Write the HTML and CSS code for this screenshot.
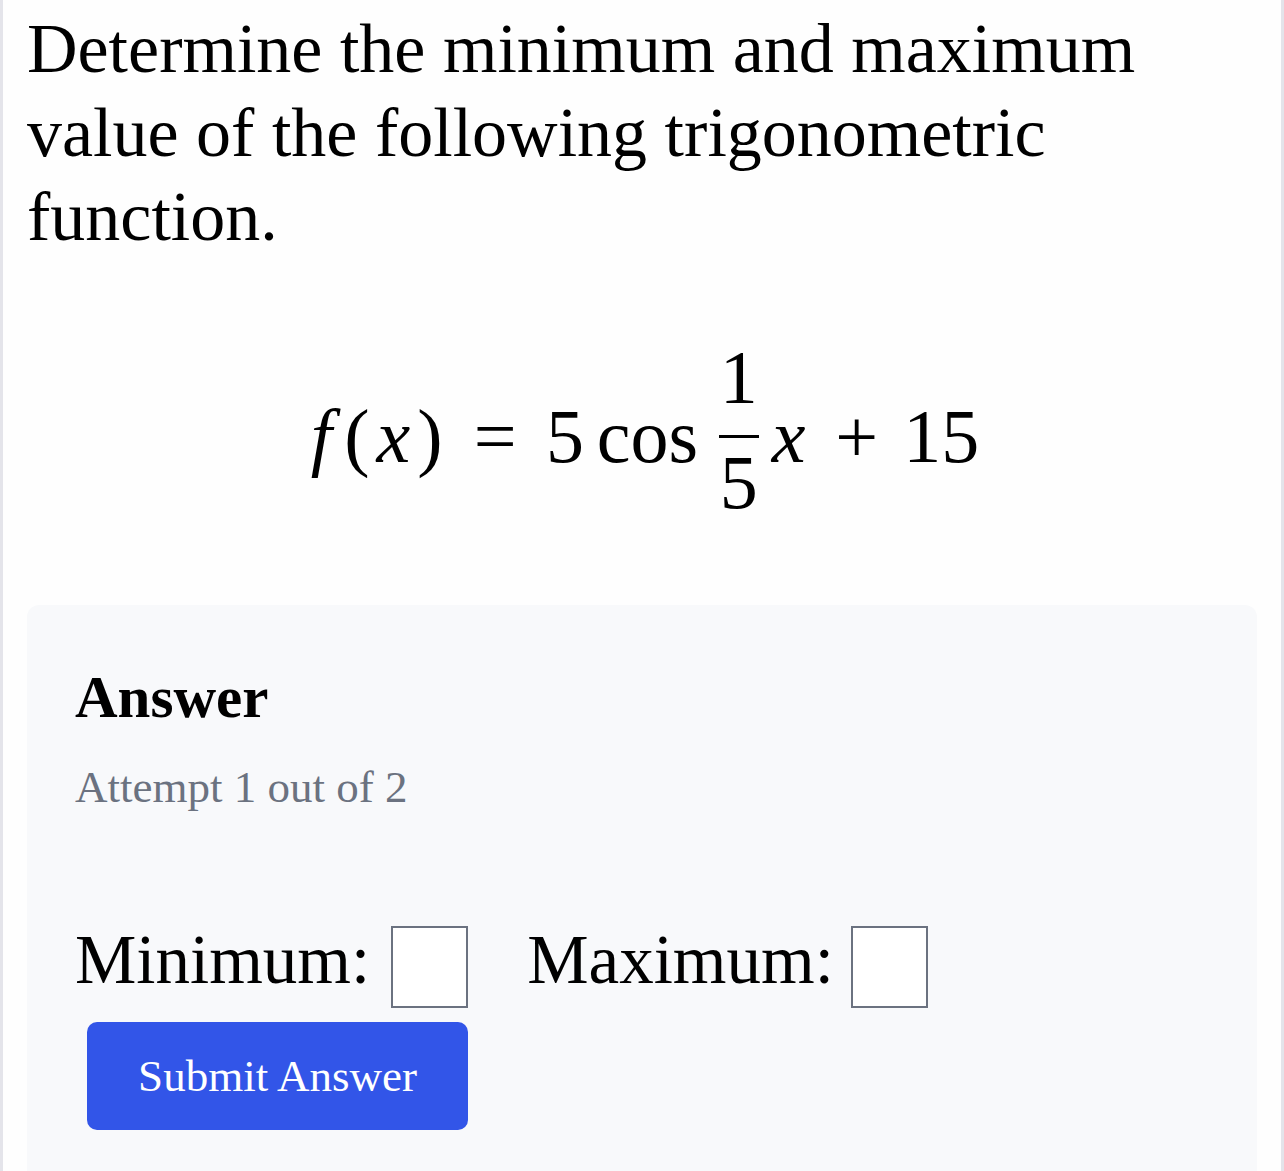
FILE: index.html
```html
<!DOCTYPE html>
<html lang="en">
<head>
    <meta charset="UTF-8">
    <meta name="viewport" content="width=device-width, initial-scale=1.0">
    <title>Trigonometric Function</title>
    <link rel="stylesheet" href="styles.css">
</head>
<body>
    <div class="page">
        <h1 class="question">Determine the minimum and maximum value of the following trigonometric function.</h1>

        <div class="math">
            <span class="atom mi f">f</span><span class="atom paren">(</span><span class="atom mi x">x</span><span class="atom paren">)</span><span class="atom rel">=</span><span class="atom">5</span><span class="atom op">cos</span><span class="frac"><span class="num">1</span><span class="den">5</span></span><span class="atom mi x">x</span><span class="atom bin">+</span><span class="atom">15</span>
        </div>

        <div class="answer-card">
            <h2>Answer</h2>
            <p class="attempt">Attempt 1 out of 2</p>
            <div class="fields">
                <label class="field">
                    <span>Minimum:</span>
                    <input type="text" name="minimum">
                </label>
                <label class="field field-max">
                    <span>Maximum:</span>
                    <input type="text" name="maximum">
                </label>
            </div>
            <button type="button" class="submit-button">Submit Answer</button>
        </div>
    </div>
</body>
</html>
```

FILE: styles.css
```css
html, body {
    margin: 0;
    height: 100%;
    overflow: hidden;
}

body {
    font-family: "Liberation Serif", "Times New Roman", serif;
    color: #000;
    background: #fff;
}

.page {
    display: flex;
    flex-direction: column;
    height: 100vh;
    box-sizing: border-box;
    padding: 0 24px;
    border-left: 3px solid #e4e4ea;
    border-right: 3px solid #e4e4ea;
    background: #fefefe;
}

.question {
    margin: 0;
    padding-top: 7px;
    font-size: 70px;
    font-weight: normal;
    line-height: 84px;
}

/* formula */
.math {
    margin-top: 80px;
    text-align: center;
    font-size: 76px;
    line-height: 1;
    white-space: nowrap;
}

.atom {
    display: inline-block;
    text-align: center;
}

.mi {
    font-style: italic;
}

.f {
    width: 0.49em;
    text-align: left;
    padding-left: 0.08em;
    box-sizing: border-box;
}

.x {
    width: 0.572em;
}

.paren {
    width: 0.389em;
}

.rel {
    width: 0.778em;
    margin: 0 0.278em;
}

.op {
    margin: 0 0.167em;
}

.bin {
    width: 0.778em;
    margin: 0 0.222em;
}

.frac {
    display: inline-flex;
    flex-direction: column;
    width: 0.52em;
    margin: 0 0.11em;
    vertical-align: 59px;
    text-align: center;
}

.num {
    padding-bottom: 20px;
    border-bottom: 3px solid #000;
}

.den {
    padding-top: 6px;
}

/* answer card */
.answer-card {
    flex: 1;
    margin-top: 85px;
    padding: 57px 48px 0;
    background: #f8f9fb;
    border-radius: 12px 12px 0 0;
}

.answer-card h2 {
    margin: 0;
    font-size: 59px;
    font-weight: bold;
    line-height: 70px;
}

.attempt {
    margin: 28px 0 0;
    font-size: 45px;
    line-height: 54px;
    color: #6b7280;
}

.fields {
    display: flex;
    align-items: center;
    gap: 59px;
    margin-top: 98px;
}

.field {
    display: flex;
    align-items: center;
    gap: 21px;
    font-size: 69px;
}

.field-max {
    gap: 17px;
}

.field input {
    width: 77px;
    height: 82px;
    margin-top: 14px;
    box-sizing: border-box;
    border: 2px solid #6b7280;
    border-radius: 0;
    background: #fff;
    font-size: 40px;
}

.submit-button {
    display: block;
    width: 381px;
    height: 108px;
    margin: 14px 0 0 12px;
    border: none;
    border-radius: 10px;
    background: #3255e8;
    color: #fff;
    font-family: "Liberation Serif", "Times New Roman", serif;
    font-size: 45px;
    cursor: pointer;
}
```
